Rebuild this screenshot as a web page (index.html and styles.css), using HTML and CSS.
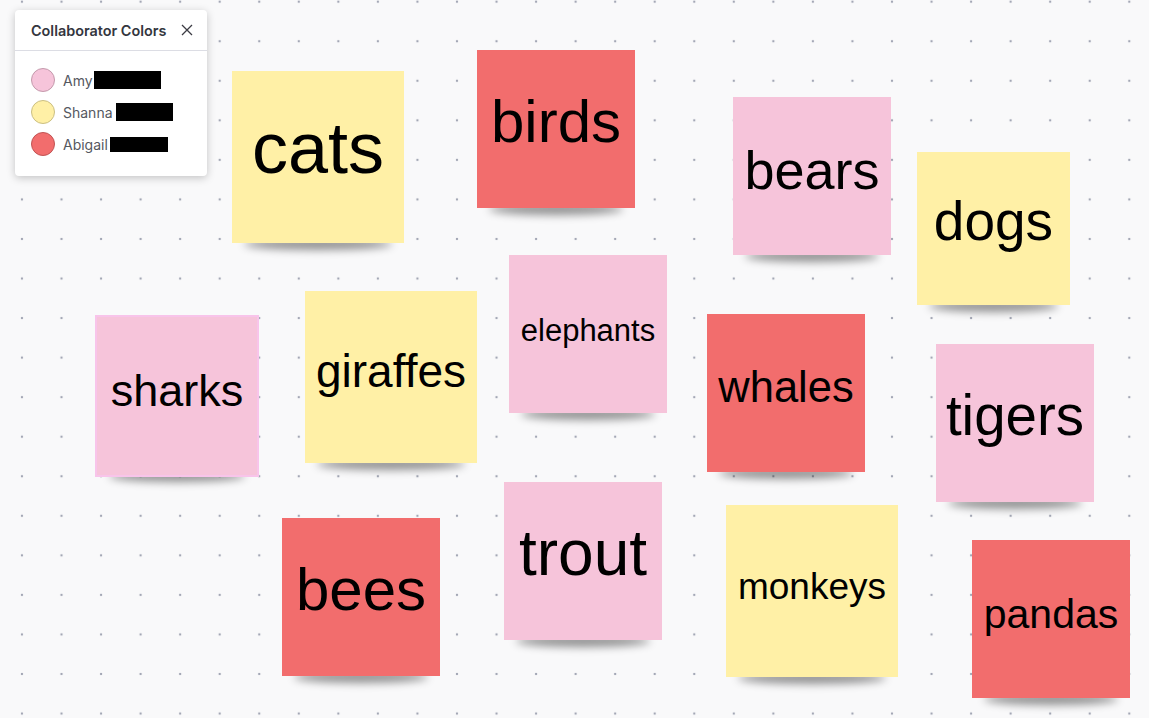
FILE: index.html
```html
<!DOCTYPE html>
<html>
<head>
<meta charset="utf-8">
<link rel="stylesheet" href="styles.css">
</head>
<body>
<div class="canvas">
  <div class="note yellow n-cats"><span class="label">cats</span></div>
  <div class="note red n-birds"><span class="label">birds</span></div>
  <div class="note pink n-bears"><span class="label">bears</span></div>
  <div class="note yellow n-dogs"><span class="label">dogs</span></div>
  <div class="note pink n-sharks"><span class="label">sharks</span></div>
  <div class="note yellow n-giraffes"><span class="label">giraffes</span></div>
  <div class="note pink n-elephants"><span class="label">elephants</span></div>
  <div class="note red n-whales"><span class="label">whales</span></div>
  <div class="note pink n-tigers"><span class="label">tigers</span></div>
  <div class="note red n-bees"><span class="label">bees</span></div>
  <div class="note pink n-trout"><span class="label">trout</span></div>
  <div class="note yellow n-monkeys"><span class="label">monkeys</span></div>
  <div class="note red n-pandas"><span class="label">pandas</span></div>

  <div class="panel">
    <div class="panel-head">
      <span class="panel-title">Collaborator Colors</span>
      <svg class="close" width="12" height="12" viewBox="0 0 12 12"><path d="M1 1 L11 11 M11 1 L1 11" stroke="#3c3c44" stroke-width="1.3" fill="none"/></svg>
    </div>
    <ul class="people">
      <li class="person"><span class="swatch sw-pink"></span><span class="pname">Amy</span><span class="redact r-amy"></span></li>
      <li class="person"><span class="swatch sw-yellow"></span><span class="pname">Shanna</span><span class="redact r-shanna"></span></li>
      <li class="person"><span class="swatch sw-red"></span><span class="pname">Abigail</span><span class="redact r-abigail"></span></li>
    </ul>
  </div>
</div>
</body>
</html>
```

FILE: styles.css
```css
html, body {
  margin: 0;
  padding: 0;
}
body {
  width: 1149px;
  height: 718px;
  overflow: hidden;
  font-family: "Liberation Sans", Arial, sans-serif;
}
.canvas {
  position: relative;
  z-index: 0;
  width: 1149px;
  height: 718px;
  background-color: #f9f9fa;
  background-image: radial-gradient(circle at center, #a3a7b5 0, #a3a7b5 1px, rgba(163,167,181,0) 1.6px);
  background-size: 39.56px 39.56px;
  background-position: 2.2px -18.1px;
}

.note {
  position: absolute;
  width: 158px;
  height: 158px;
  box-sizing: border-box;
  display: flex;
  align-items: center;
  justify-content: center;
  color: #000;
}
.note::after {
  content: "";
  position: absolute;
  left: 10px;
  right: 14px;
  bottom: 0;
  height: 12px;
  border-radius: 50%;
  box-shadow: 2px 7px 9px rgba(0,0,0,0.42);
  z-index: -1;
}
.label {
  line-height: 1;
  padding-bottom: 0.24em;
  white-space: nowrap;
}
.yellow { background: #fff0a6; }
.pink { background: #f6c4da; }
.red { background: #f26d6d; }

.n-cats { left: 232px; top: 71px; width: 172px; height: 172px; font-size: 72px; }
.n-birds { left: 477px; top: 50px; font-size: 60px; }
.n-bears { left: 733px; top: 97px; font-size: 54px; }
.n-dogs { left: 917px; top: 152px; width: 153px; height: 153px; font-size: 55px; }
.n-sharks { left: 95px; top: 315px; width: 164px; height: 162px; font-size: 45px; border: 2px solid #f8c4ea; }
.n-giraffes { left: 305px; top: 291px; width: 172px; height: 172px; font-size: 46px; }
.n-elephants { left: 509px; top: 255px; font-size: 31px; }
.n-whales { left: 707px; top: 314px; font-size: 43.5px; }
.n-tigers { left: 936px; top: 344px; font-size: 56.5px; }
.n-bees { left: 282px; top: 518px; font-size: 60px; }
.n-trout { left: 504px; top: 482px; font-size: 64px; }
.n-monkeys { left: 726px; top: 505px; width: 172px; height: 172px; font-size: 37px; }
.n-pandas { left: 972px; top: 540px; font-size: 41px; }

.panel {
  position: absolute;
  left: 15px;
  top: 10px;
  width: 192px;
  height: 166px;
  background: #fff;
  border-radius: 4px;
  box-shadow: 0 2px 8px rgba(0,0,0,0.22);
  font-family: Inter, Roboto, "Liberation Sans", sans-serif;
}
.panel-head {
  height: 40px;
  border-bottom: 1px solid #dcdde4;
  display: flex;
  align-items: center;
  justify-content: space-between;
  padding: 0 14px 0 16px;
}
.panel-title {
  font-size: 14.4px;
  font-weight: 600;
  color: #33363e;
}
.close {
  display: block;
}
.people {
  list-style: none;
  margin: 0;
  padding: 17px 0 0 16px;
}
.person {
  display: flex;
  align-items: center;
  height: 24px;
  margin-bottom: 8px;
}
.swatch {
  width: 22px;
  height: 22px;
  border-radius: 50%;
  box-sizing: content-box;
  border: 1px solid #999;
  margin-right: 8px;
}
.sw-pink { background: #f6c4da; border-color: #c49aac; }
.sw-yellow { background: #fff0a6; border-color: #cbbf83; }
.sw-red { background: #f26d6d; border-color: #c05454; }
.pname {
  font-size: 14px;
  color: #55585f;
}
.redact {
  background: #000;
  height: 18px;
}
.r-amy { width: 67px; margin-left: 1px; }
.r-shanna { width: 57px; margin-left: 3px; }
.r-abigail { width: 58px; margin-left: 2px; height: 15px; }
```
